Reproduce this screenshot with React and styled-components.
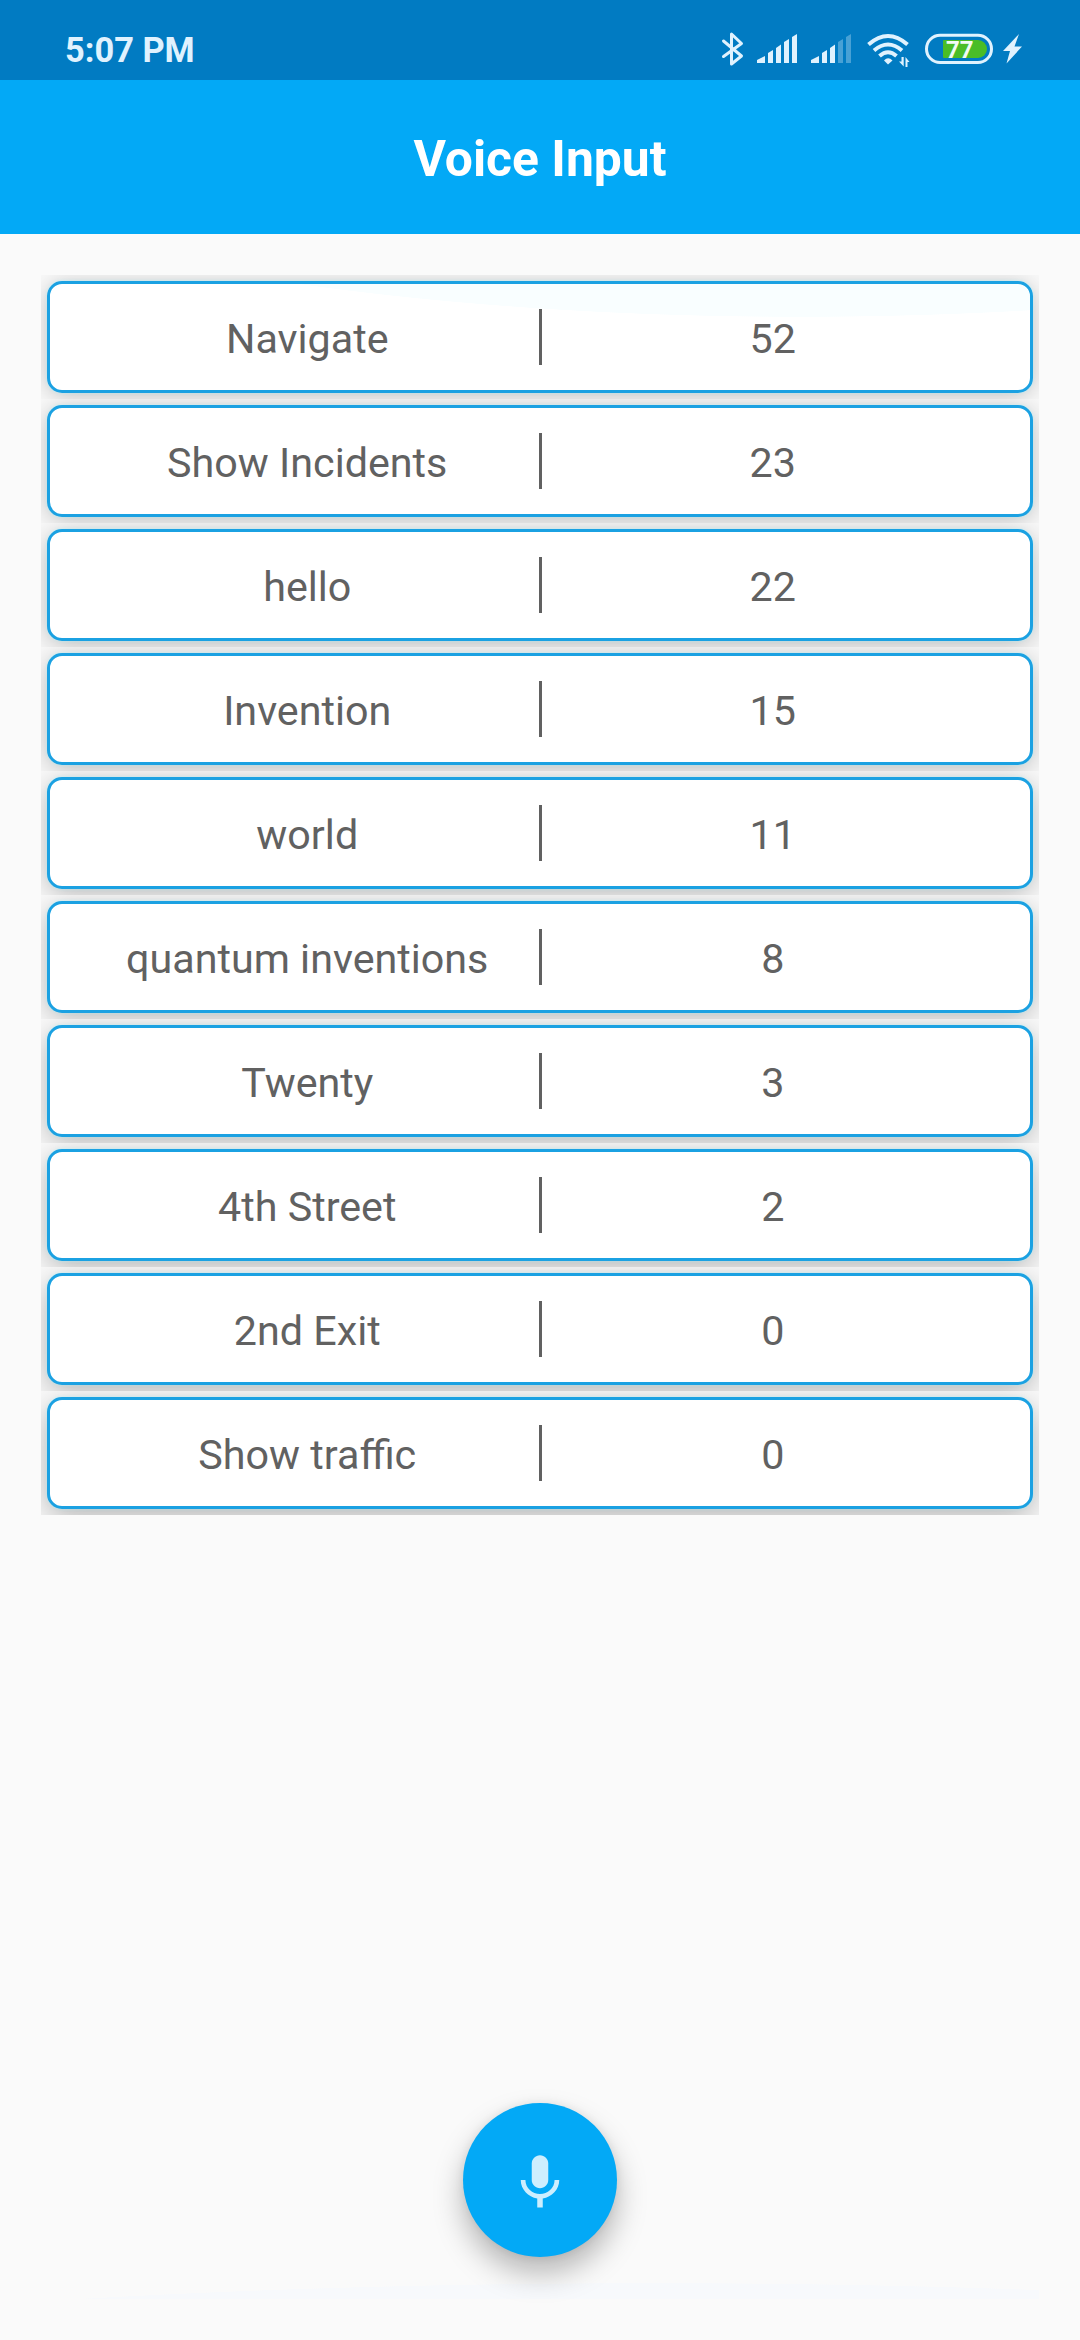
import React from 'react';
import styled, { createGlobalStyle } from 'styled-components';

const GlobalStyle = createGlobalStyle`
  * { box-sizing: border-box; }
  body { margin: 0; background: #fafafa; font-family: Roboto, "Liberation Sans", sans-serif; }
`;

const Screen = styled.div`
  width: 1080px;
  height: 2340px;
  display: flex;
  flex-direction: column;
  background: #fafafa;
  overflow: hidden;
`;

const StatusBar = styled.header`
  height: 80px;
  flex: none;
  padding: 20px 0 0 65px;
  display: flex;
  justify-content: space-between;
  align-items: flex-start;
  background: #017bc2;
  color: #e0f2fe;
`;

const Clock = styled.div`
  font-size: 34.4px;
  line-height: 60px;
  font-weight: 700;
  white-space: nowrap;
`;

const StatusIcons = styled.svg`
  width: 350px;
  height: 60px;
  margin-right: 30px;
  display: block;
  text { font: 700 24px Roboto, "Liberation Sans", sans-serif; }
`;

const TitleBar = styled.div`
  height: 154px;
  flex: none;
  display: flex;
  align-items: center;
  justify-content: center;
  background: #03a9f6;
`;

const Title = styled.h1`
  margin: 0;
  padding-top: 4px;
  color: #fff;
  font-size: 49.8px;
  line-height: 60px;
  font-weight: 700;
`;

const Content = styled.main`
  flex: 1;
  margin: 41px;
  display: flex;
  flex-direction: column;
  align-items: center;
  justify-content: space-between;
  background: radial-gradient(ellipse 1477px 200px at 614px 2208px, #f7f9fc 99.8%, #fafafa 100%);
`;

const List = styled.div`
  align-self: stretch;
  display: flex;
  flex-direction: column;
`;

const Cell = styled.div`
  height: 124px;
  padding: 6px;
  overflow: hidden;
  display: flex;
  background: #fafafa;
`;

const Card = styled.div`
  flex: 1;
  display: flex;
  align-items: center;
  padding: 0 26px;
  border: 3px solid #1ba1e2;
  border-radius: 15px;
  background: ${(p) => (p.$tinted
    ? 'radial-gradient(ellipse 973px 230px at 750px -197px, #f9feff 99.8%, #fff 100%)'
    : '#fff')};
  box-shadow: 0 0 3px rgba(150, 245, 255, 0.5),
    0 ${(p) => 3 + p.$depth * 0.6}px ${(p) => 26 + p.$depth * 0.6}px
      rgba(0, 0, 0, ${(p) => 0.23 + p.$depth * 0.006});
`;

const Label = styled.div`
  flex: 1;
  text-align: center;
  padding-top: 4px;
  font-size: 41.25px;
  line-height: 50px;
  color: #616161;
  white-space: nowrap;
`;

const Divider = styled.div`
  width: 3px;
  height: 56px;
  background: #616161;
`;

const MicButton = styled.button`
  width: 154px;
  height: 154px;
  margin-bottom: 42px;
  padding: 0;
  border: 0;
  border-radius: 50%;
  background: #03a9f6;
  box-shadow: 0 16px 30px rgba(0, 0, 0, 0.28), 0 0 10px rgba(0, 0, 0, 0.07);
  display: flex;
  align-items: center;
  justify-content: center;
  svg { width: 66px; height: 66px; display: block; }
`;

const rows = [
  ['Navigate', 52],
  ['Show Incidents', 23],
  ['hello', 22],
  ['Invention', 15],
  ['world', 11],
  ['quantum inventions', 8],
  ['Twenty', 3],
  ['4th Street', 2],
  ['2nd Exit', 0],
  ['Show traffic', 0],
];

// Five slanted-top bars; `level` of them are lit.
function Signal({ x, level }) {
  const bars = [
    'M0 33V30L8 26V33Z',
    'M11 33V23L16 20V33Z',
    'M19 33V18L24 14.5V33Z',
    'M27 33V12L32 9V33Z',
    'M35 33V7L40 4V33Z',
  ];
  return (
    <g transform={`translate(${x} 0)`} fill="#e0f2fe">
      {bars.map((d, i) => <path key={d} d={d} opacity={i < level ? 1 : 0.32} />)}
    </g>
  );
}

function Indicators() {
  return (
    <StatusIcons viewBox="0 10 350 60">
      <path d="M23.500 31 41.500 46 31.500 54V24L41.500 33.500 23.500 46.500" fill="none" stroke="#e0f2fe" strokeWidth="3" strokeLinejoin="round" strokeLinecap="round" />
      <g transform="translate(0 20)">
        <Signal x={57} level={5} />
        <Signal x={111} level={3} />
      </g>
      <g fill="none" stroke="#e0f2fe" strokeWidth="4">
        <path d="M168.500 34.500Q188 17.500 207.500 34.500" />
        <path d="M174 40.500Q188 28.500 202 40.500" />
        <path d="M179.500 46Q188 38.500 196.500 46" />
      </g>
      <path d="M184 50.500Q188 46 192.500 50.500L188 54.500Z" fill="#e0f2fe" />
      <path d="M201.500 47h2.200v9.500L199 51.500h2.500zM205.500 57V47l4 5h-2v5z" fill="#e0f2fe" />
      <rect x="226.500" y="25.300" width="65" height="27.200" rx="13.600" fill="none" stroke="#e0f2fe" strokeWidth="3" />
      <path d="M244 30H278A9 9 0 0 1 278 48H244Q243 48 243 47V31Q243 30 244 30Z" fill="#4abd27" />
      <text x="246" y="47.800" fill="#f1fbf5">77</text>
      <path d="M319 24 303 41H310L306.500 53.500 322 36.500H314.500Z" fill="#e0f2fe" />
    </StatusIcons>
  );
}

export default function App() {
  return (
    <>
      <GlobalStyle />
      <Screen>
        <StatusBar>
          <Clock>5:07 PM</Clock>
          <Indicators />
        </StatusBar>
        <TitleBar><Title>Voice Input</Title></TitleBar>
        <Content>
          <List>
            {rows.map(([label, count], i) => (
              <Cell key={label}>
                <Card $tinted={i === 0} $depth={i}>
                  <Label>{label}</Label>
                  <Divider />
                  <Label>{count}</Label>
                </Card>
              </Cell>
            ))}
          </List>
          <MicButton aria-label="Start voice input">
            <svg viewBox="0 0 24 24" fill="#cdeefe">
              <path d="M12 15c1.660 0 3-1.340 3-3V6c0-1.660-1.340-3-3-3S9 4.340 9 6v6c0 1.660 1.340 3 3 3z" />
              <path d="M17.300 12c0 3-2.540 5.100-5.300 5.100S6.700 15 6.700 12H5c0 3.410 2.720 6.230 6 6.720V22h2v-3.280c3.280-.48 6-3.300 6-6.720z" />
            </svg>
          </MicButton>
        </Content>
      </Screen>
    </>
  );
}
